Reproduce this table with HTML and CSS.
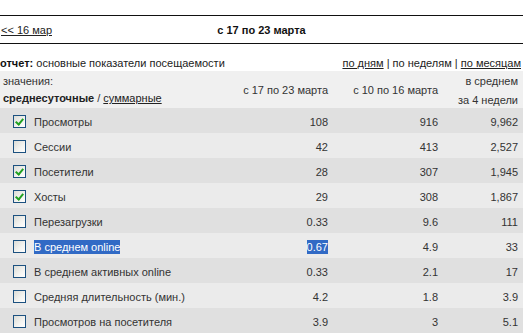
FILE: index.html
```html
<!DOCTYPE html>
<html>
<head>
<meta charset="utf-8">
<link rel="stylesheet" href="styles.css">
</head>
<body>
<div class="nav">
  <a class="prev" href="#">&lt;&lt; 16 мар</a>
  <span class="period">с 17 по 23 марта</span>
  <span class="spacer"></span>
</div>
<div class="report">
  <div class="title"><b>отчет:</b> основные показатели посещаемости</div>
  <div class="modes"><a href="#">по дням</a> | по неделям | <a href="#">по месяцам</a></div>
</div>
<div class="grid">
  <div class="head label">
    <div>значения:</div>
    <div class="vals"><b>среднесуточные</b> / <a href="#">суммарные</a></div>
  </div>
  <div class="head num">с 17 по 23 марта</div>
  <div class="head num">с 10 по 16 марта</div>
  <div class="head num">в среднем<br>за 4 недели</div>

  <div class="row dark"><div class="label"><span class="cb on"></span>Просмотры</div><div class="num">108</div><div class="num">916</div><div class="num">9,962</div></div>
  <div class="row light"><div class="label"><span class="cb"></span>Сессии</div><div class="num">42</div><div class="num">413</div><div class="num">2,527</div></div>
  <div class="row dark"><div class="label"><span class="cb on"></span>Посетители</div><div class="num">28</div><div class="num">307</div><div class="num">1,945</div></div>
  <div class="row light"><div class="label"><span class="cb on"></span>Хосты</div><div class="num">29</div><div class="num">308</div><div class="num">1,867</div></div>
  <div class="row dark"><div class="label"><span class="cb"></span>Перезагрузки</div><div class="num">0.33</div><div class="num">9.6</div><div class="num">111</div></div>
  <div class="row light"><div class="label"><span class="cb"></span><span class="sel">В среднем online</span></div><div class="num"><span class="sel">0.67</span></div><div class="num">4.9</div><div class="num">33</div></div>
  <div class="row dark"><div class="label"><span class="cb"></span>В среднем активных online</div><div class="num">0.33</div><div class="num">2.1</div><div class="num">17</div></div>
  <div class="row light"><div class="label"><span class="cb"></span>Средняя длительность (мин.)</div><div class="num">4.2</div><div class="num">1.8</div><div class="num">3.9</div></div>
  <div class="row dark"><div class="label"><span class="cb"></span>Просмотров на посетителя</div><div class="num">3.9</div><div class="num">3</div><div class="num">5.1</div></div>
</div>
</body>
</html>
```
FILE: styles.css
```css
html, body {
  margin: 0;
  padding: 0;
  background: #fff;
}
body {
  font-family: "Liberation Sans", Arial, sans-serif;
  font-size: 11px;
  color: #333;
  width: 523px;
}
a {
  color: #222;
  text-decoration: underline;
}
.nav {
  margin-top: 15px;
  height: 27px;
  border-top: 1px solid #111;
  border-bottom: 1px solid #111;
  display: grid;
  grid-template-columns: 1fr auto 1fr;
  align-items: center;
  color: #111;
}
.nav .prev {
  padding-left: 1px;
  color: #222;
}
.nav .period {
  font-weight: bold;
  color: #111;
}
.report {
  display: flex;
  justify-content: space-between;
  align-items: flex-end;
  height: 27px;
  box-sizing: border-box;
  padding: 0 2px 2px 0;
}
.report .title {
  color: #222;
}
.report .title b {
  color: #111;
}
.modes {
  font-size: 11px;
  color: #222;
}
.grid {
  display: grid;
  grid-template-columns: 223px 110px 110px 80px;
}
.row {
  display: contents;
}
.head {
  background: #f0f0f0;
  height: 37px;
  display: flex;
  flex-direction: column;
  justify-content: center;
  color: #333;
}
.head.label {
  padding-left: 3px;
  gap: 5px;
}
.head.label .vals b {
  color: #222;
}
.head.num {
  align-items: flex-end;
  text-align: right;
  padding-right: 5px;
  line-height: 19px;
  padding-top: 2px;
  box-sizing: border-box;
}
.row > div {
  height: 25px;
  display: flex;
  align-items: center;
  padding-top: 2px;
  box-sizing: border-box;
}
.row.dark > div { background: #e0e0e0; }
.row.light > div { background: #ebebeb; }
.row > .label {
  padding-left: 13px;
}
.row > .num {
  justify-content: flex-end;
  padding-right: 5px;
}
.cb {
  display: inline-block;
  width: 11px;
  height: 11px;
  border: 1px solid #1c5180;
  background: linear-gradient(135deg, #dcdcd6 0%, #f4f4f1 60%, #fff 100%);
  margin-right: 8px;
  position: relative;
  flex: none;
}
.cb.on::after {
  content: "";
  position: absolute;
  left: 3px;
  top: 1px;
  width: 3px;
  height: 6px;
  border-right: 2px solid #21a121;
  border-bottom: 2px solid #21a121;
  transform: rotate(40deg);
}
.sel {
  background: #316ac5;
  color: #fff;
  padding: 1px 0;
}
```
